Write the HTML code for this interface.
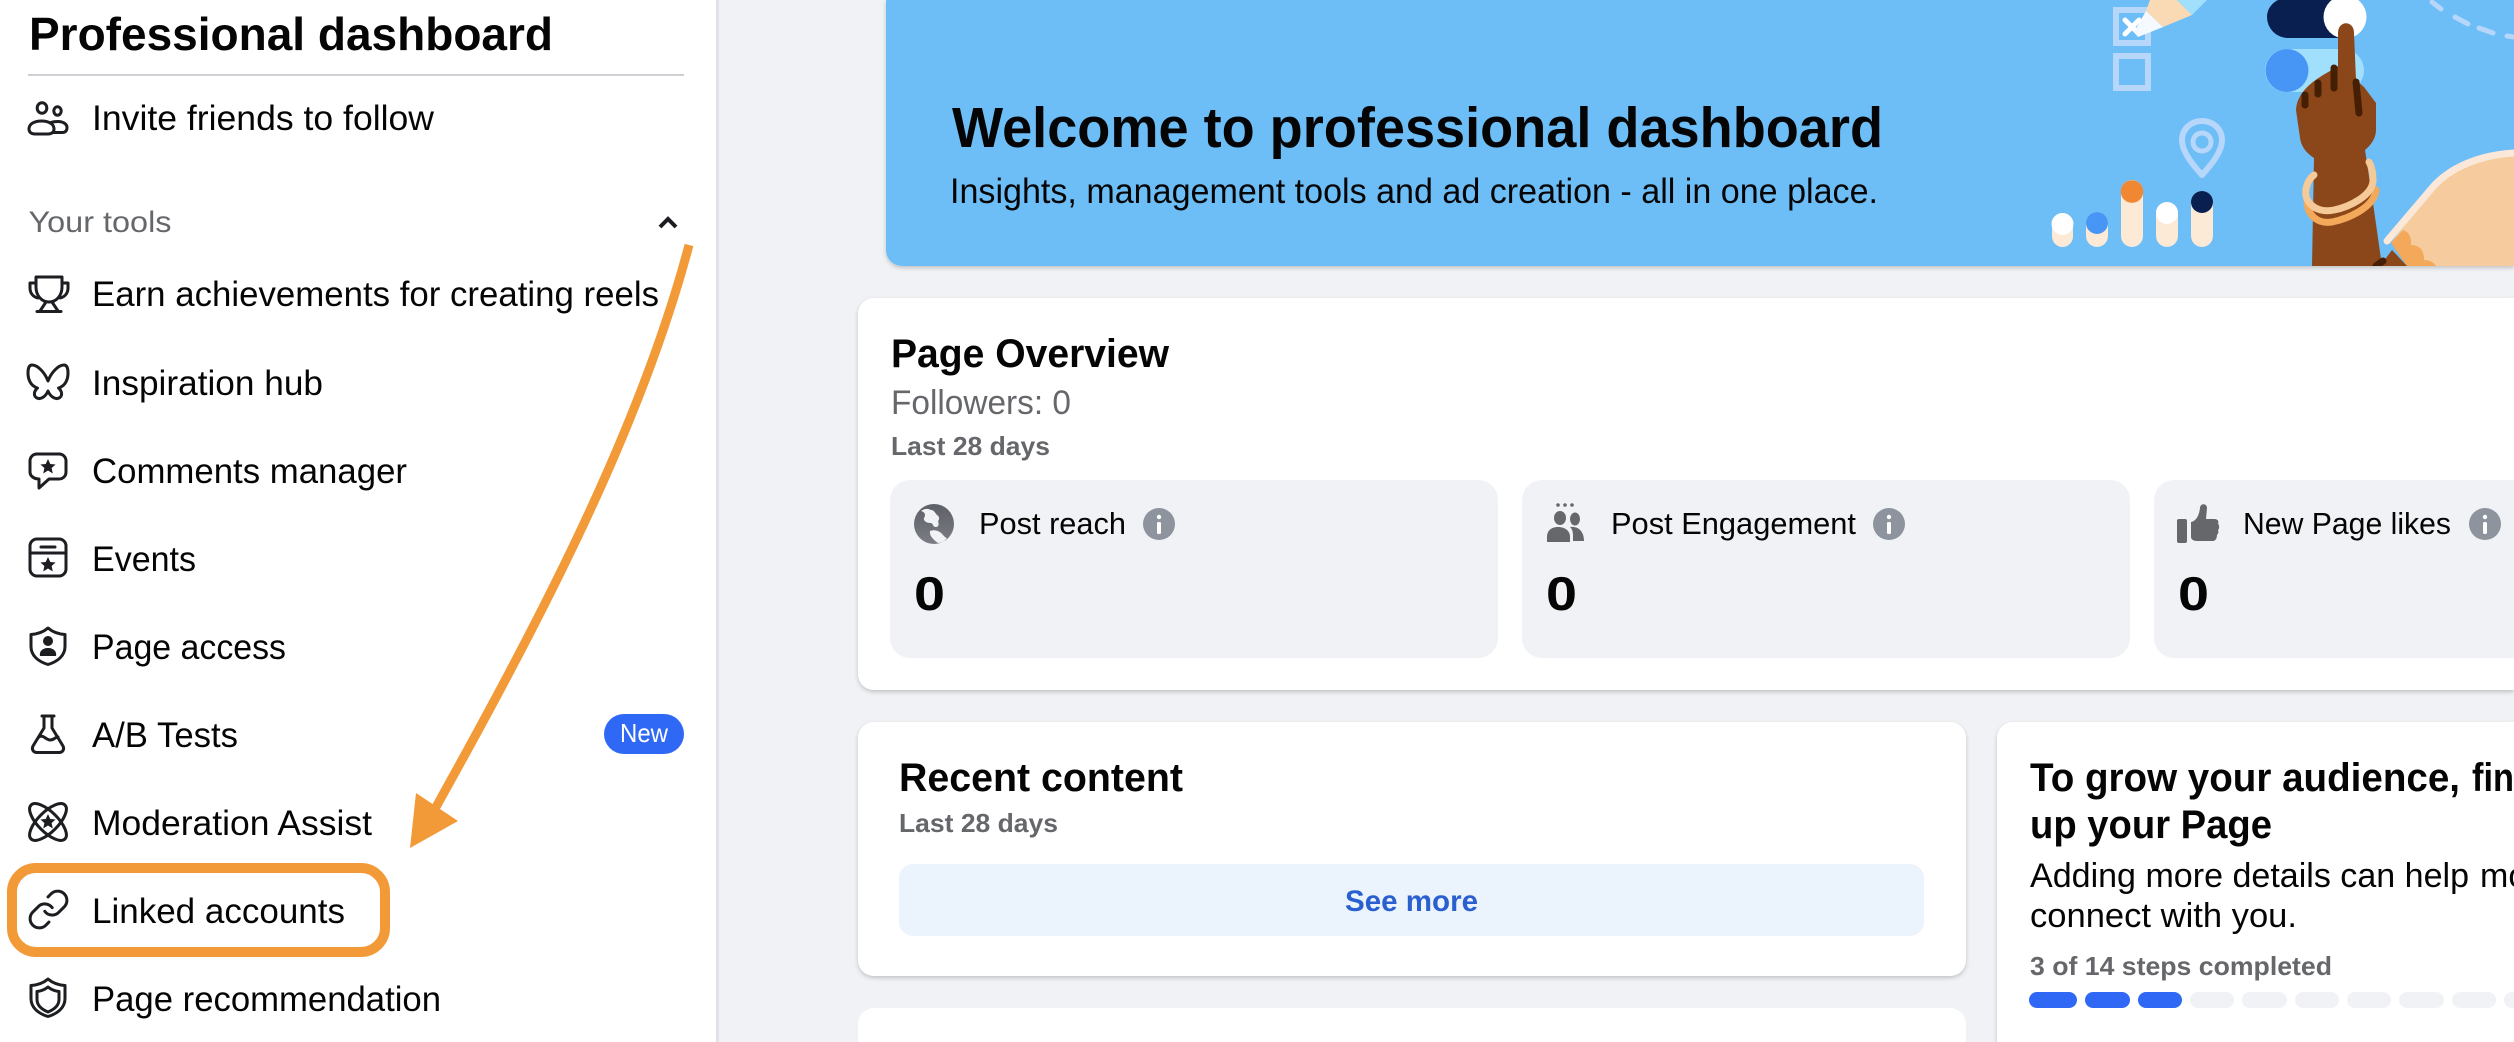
<!DOCTYPE html>
<html lang="en"><head><meta charset="utf-8"><title>Professional dashboard</title>
<style>
html,body{margin:0;padding:0;width:2514px;height:1042px;overflow:hidden;background:#f0f2f5}
svg{display:block}
text{font-family:"Liberation Sans",Arial,sans-serif;fill:#050505}
.r{font-size:35px}
.g{font-size:26px;font-weight:700;fill:#65676b}
.h{font-size:40px;font-weight:700}
.t{font-size:31px}
.n{font-size:47px;font-weight:700}
.ic{fill:none;stroke:#1c1e21;stroke-width:3;stroke-linejoin:round;stroke-linecap:round}
.f{fill:#1c1e21;stroke:none}
</style></head><body>
<svg width="2514" height="1042" viewBox="0 0 2514 1042" xmlns="http://www.w3.org/2000/svg">
<defs>
<filter id="s" x="-5%" y="-5%" width="110%" height="110%"><feDropShadow dx="0" dy="2" stdDeviation="2" flood-color="#000" flood-opacity=".2"/></filter>
<linearGradient id="gr" x1="0" y1="0" x2="0" y2="1"><stop offset="0" stop-color="#5d6066"/><stop offset="1" stop-color="#7a7d83"/></linearGradient>
<clipPath id="bc"><path d="M886 0H2514V266H902a16 16 0 0 1-16-16z"/></clipPath>
</defs>
<rect width="2514" height="1042" fill="#f0f2f5"/>
<!-- Sidebar -->
<rect x="716" width="3" height="1042" fill="#e0e2e7"/>
<rect width="716" height="1042" fill="#fff"/>
<text x="29" y="50" font-size="46" font-weight="700" textLength="524" lengthAdjust="spacingAndGlyphs">Professional dashboard</text>
<rect x="28" y="74" width="656" height="2" fill="#ced0d4"/>
<text class="r" x="92" y="130" textLength="342" lengthAdjust="spacingAndGlyphs">Invite friends to follow</text>
<text x="28.500" y="232" font-size="30" style="fill:#65676b" textLength="143" lengthAdjust="spacingAndGlyphs">Your tools</text>
<polyline points="660,227 668,219 676,227" fill="none" stroke="#1c1e21" stroke-width="4"/>
<text class="r" x="92" y="306" textLength="567" lengthAdjust="spacingAndGlyphs">Earn achievements for creating reels</text>
<text class="r" x="92" y="395" textLength="231" lengthAdjust="spacingAndGlyphs">Inspiration hub</text>
<text class="r" x="92" y="483" textLength="315" lengthAdjust="spacingAndGlyphs">Comments manager</text>
<text class="r" x="92" y="571" textLength="104" lengthAdjust="spacingAndGlyphs">Events</text>
<text class="r" x="92" y="659" textLength="194" lengthAdjust="spacingAndGlyphs">Page access</text>
<text class="r" x="92" y="747" textLength="146" lengthAdjust="spacingAndGlyphs">A/B Tests</text>
<text class="r" x="92" y="835" textLength="280" lengthAdjust="spacingAndGlyphs">Moderation Assist</text>
<text class="r" x="92" y="923" textLength="253" lengthAdjust="spacingAndGlyphs">Linked accounts</text>
<text class="r" x="92" y="1011" textLength="349" lengthAdjust="spacingAndGlyphs">Page recommendation</text>
<rect x="604" y="714" width="80" height="40" rx="20" fill="#2e68f5"/>
<text x="620" y="742" font-size="26" style="fill:#fff" textLength="48" lengthAdjust="spacingAndGlyphs">New</text>
<!-- sidebar icons -->
<g class="ic">
<ellipse cx="42" cy="108" rx="4.800" ry="5.300"/><ellipse cx="57.500" cy="111" rx="3.700" ry="4.300"/>
<path d="M35 134h13c4 0 6-2 6-5 0-5-5-8-12.500-8S29 124 29 129c0 3 2 5 6 5z"/>
<path d="M50 123c2-1 5-1.500 8-1.500 5 0 9 2.500 9 6 0 3-1.500 5-4.500 5H54"/>
<path d="M36 277h26v10c0 9-6 15-13 15s-13-6-13-15z"/>
<path d="M36 283h-6v5c0 5 3 9 8 10M62 283h6v5c0 5-3 9-8 10"/>
<path d="M46 302l-6 9M52 302l6 9M37 311.500h24"/>
<path d="M48 381C45 373 38 365 32 365C29 365 28 368 28 373C28 380 31 386 37.500 388C34 391 33 396 37 398C41 400 46 396 48 391C50 396 55 400 59 398C63 396 62 391 58.500 388C65 386 68 380 68 373C68 368 67 365 64 365C58 365 51 373 48 381Z"/>
<path d="M37 454h22c4 0 7 3 7 7v11c0 4-3 7-7 7H49l-10 9v-9c-5 0-9-3-9-7v-11c0-4 3-7 7-7z"/>
<rect x="30" y="539" width="36" height="37" rx="7"/><path d="M30 553h36M41 547h14"/>
<path d="M48 628c4 3.500 10 6 17 6.500v12c0 9-7 15-17 18-10-3-17-9-17-18v-12c7-.5 13-3 17-6.500z"/>
<path d="M42 716h12M44 716v12M52 716v12L63 746c1.500 3 0 6.500-4 6.500H37c-4 0-5.500-3.500-4-6.500l11-18"/>
<path d="M39 737c4-3 7 3 11 3 4 0 5-3 8-3"/>
<ellipse cx="48" cy="822" rx="24" ry="10" transform="rotate(45 48 822)"/>
<ellipse cx="48" cy="822" rx="24" ry="10" transform="rotate(-45 48 822)"/>
<g transform="translate(26.300 887.300) scale(1.850)" stroke-width="1.620"><path d="M10 13a5 5 0 0 0 7.540.54l3-3a5 5 0 0 0-7.070-7.070l-1.720 1.710"/><path d="M14 11a5 5 0 0 0-7.540-.54l-3 3a5 5 0 0 0 7.070 7.070l1.710-1.710"/></g>
<path d="M48 979c4 3.500 10 6 17 6.500v13c0 9-7 15-17 18-10-3-17-9-17-18v-13c7-.5 13-3 17-6.500z"/>
<path d="M48 987c3 2.500 7 4 11 4.500v8c0 6-5 10-11 12.500-6-2.500-11-6.500-11-12.500v-8c4-.5 8-2 11-4.500z"/>
</g>
<g class="f">
<path d="M48 459l2.300 5 5.300.5-4 3.500 1.200 5.500-4.800-3-4.800 3 1.200-5.500-4-3.500 5.300-.5z"/>
<path d="M48 557l2.300 5 5.300.5-4 3.500 1.200 5.500-4.800-3-4.800 3 1.200-5.500-4-3.500 5.300-.5z"/>
<circle cx="48" cy="641" r="5"/><path d="M40 656c-1-5 3-8 8-8s9 3 8 8z"/>
<path d="M48 814l2.300 5 5.300.5-4 3.500 1.200 5.500-4.800-3-4.800 3 1.200-5.500-4-3.500 5.300-.5z"/>
</g>
<!-- Annotation -->
<path d="M689 245C640 430 540 620 436 807" fill="none" stroke="#f39a38" stroke-width="9"/>
<polygon points="410,848 416,793 458,821" fill="#f39a38"/>
<rect x="12" y="868" width="373" height="84" rx="24" fill="none" stroke="#f39a38" stroke-width="10"/>
<!-- Banner -->
<path d="M886 0H2514V266H902a16 16 0 0 1-16-16z" fill="#6dbdf7" filter="url(#s)"/>
<text x="952" y="147" font-size="57" font-weight="700" textLength="931" lengthAdjust="spacingAndGlyphs">Welcome to professional dashboard</text>
<text x="950" y="203" font-size="35" textLength="928" lengthAdjust="spacingAndGlyphs">Insights, management tools and ad creation - all in one place.</text>
<g clip-path="url(#bc)">
<g fill="none" stroke="#b6d6fa" stroke-width="6"><rect x="2116" y="10" width="32" height="33"/><rect x="2116" y="56" width="32" height="32"/></g>
<path d="M2125 20l14 14M2139 20l-14 14" stroke="#fff" stroke-width="5" stroke-linecap="round"/>
<polygon points="2146,11 2163,27 2138,37 2134,32" fill="#f4faff"/>
<polygon points="2146,11 2150,0 2177,0 2192,15 2163,27" fill="#fadab4"/>
<polygon points="2177,0 2207,0 2192,15" fill="#a0e0fd"/>
<path d="M2432 2l9 7M2455 17l13 7M2479 28l14 5M2507 36l7 1" stroke="#b6d6fa" stroke-width="5" stroke-linecap="round"/>
<path d="M2288 0H2352c8 3 14 9 14 17s-9 21-21 21H2288a21 21 0 0 1-21-21c0-8 5-14 11-17z" fill="#081f4f"/><circle cx="2345" cy="17" r="21.500" fill="#fff"/>
<rect x="2265" y="49" width="99" height="43" rx="21.500" fill="#a0e0fd"/><circle cx="2287" cy="70.500" r="21.500" fill="#4796f6"/>
<path d="M2202 175c-7-8-20-22-20-35 0-11 9-19 20-19s20 8 20 19c0 13-13 27-20 35z" fill="none" stroke="#b6d6fa" stroke-width="6" stroke-linejoin="round"/>
<circle cx="2202" cy="142" r="9" fill="none" stroke="#b6d6fa" stroke-width="5"/>
<rect x="2052" y="213" width="21" height="34" rx="10.500" fill="#fce9d6"/><circle cx="2062.500" cy="224" r="11" fill="#fff"/>
<rect x="2086" y="212" width="22" height="35" rx="11" fill="#fce9d6"/><circle cx="2097" cy="223" r="11" fill="#4796f6"/>
<rect x="2121" y="180" width="22" height="67" rx="11" fill="#fce9d6"/><circle cx="2132" cy="191.500" r="11.300" fill="#f08733"/>
<rect x="2156" y="202" width="22" height="45" rx="11" fill="#fce9d6"/><circle cx="2167" cy="213" r="11" fill="#fff"/>
<rect x="2191" y="191" width="22" height="56" rx="11" fill="#fce9d6"/><circle cx="2202" cy="202" r="11" fill="#081f4f"/>
<!-- sleeve -->
<path d="M2391 243L2432 190C2450 168 2480 156 2514 155V266H2420z" fill="#f6cc9e"/>
<path d="M2387 241L2432 188C2450 167 2480 155 2514 153" fill="none" stroke="#fce8d8" stroke-width="7" stroke-linecap="round"/>
<path d="M2391 243L2403 230Q2412 233 2411 245Q2424 245 2424 260Q2432 260 2436 266H2407z" fill="#f4a95a"/>
<!-- hand -->
<path d="M2331 70L2338 66V33c0-13 16-13 16 0L2356 80l8 7 12 16v27c0 8-5 15-11 20l8 53 9 63h-70l2-108c-8-5-13-12-14-20l-4-28c1-18 17-30 36-40z" fill="#8b4719"/>
<path d="M2380 266l12-16 15 16z" fill="#8b4719"/>
<path d="M2376 266l7-5" stroke="#441f03" stroke-width="7" stroke-linecap="round"/>
<path d="M2305 95v10M2318 83v11M2334 68v20M2356 82l3 31" stroke="#441f03" stroke-width="7" stroke-linecap="round" fill="none"/>
<path d="M2307 202c1 15 12 22 25 20 15-3 42-14 44-32" fill="none" stroke="#f4a95a" stroke-width="7" stroke-linecap="round"/>
<path d="M2314 175c-9 7-10 20-6 26 6 9 16 11 26 9 15-3 38-14 39-29 0-7-1-14-4-19" fill="none" stroke="#f5c998" stroke-width="7" stroke-linecap="round"/>
</g>
<!-- Page overview -->
<path d="M874 298H2514V690H874a16 16 0 0 1-16-16V314a16 16 0 0 1 16-16z" fill="#fff" filter="url(#s)"/>
<text class="h" x="891" y="367" textLength="278" lengthAdjust="spacingAndGlyphs">Page Overview</text>
<text x="891" y="414" font-size="34" style="fill:#65676b" textLength="180" lengthAdjust="spacingAndGlyphs">Followers: 0</text>
<text class="g" x="891" y="455" textLength="159" lengthAdjust="spacingAndGlyphs">Last 28 days</text>
<rect x="890" y="480" width="608" height="178" rx="20" fill="#f0f2f5"/>
<rect x="1522" y="480" width="608" height="178" rx="20" fill="#f0f2f5"/>
<path d="M2174 480H2514V658H2174a20 20 0 0 1-20-20V500a20 20 0 0 1 20-20z" fill="#f0f2f5"/>
<circle cx="934" cy="524" r="20" fill="url(#gr)"/>
<path d="M921 511c4 1 5 4 3 7-1 3 3 5 6 5 4 0 2 4 6 4 3 0 3-3 2-6 2-2 1-5-1-6-2-2-3-5-6-5-4-2-7-1-10 1zM930 531c5-2 10 0 13 4 2 2 3 3 4 3-2 3-5 5-9 5-4-3-9-7-8-12z" fill="#f0f2f5"/>
<text class="t" x="979" y="534" textLength="147" lengthAdjust="spacingAndGlyphs">Post reach</text>
<circle cx="1159" cy="524" r="16" fill="#8d949e"/><circle cx="1159" cy="517" r="2.200" fill="#fff"/><rect x="1157" y="522" width="4" height="12" rx="1.500" fill="#fff"/>
<text class="n" x="914" y="610" textLength="31" lengthAdjust="spacingAndGlyphs">0</text>
<g fill="#65676b"><circle cx="1558" cy="505" r="1.800"/><circle cx="1565" cy="505" r="1.800"/><circle cx="1572" cy="505" r="1.800"/>
<ellipse cx="1560" cy="518" rx="6" ry="7"/><ellipse cx="1575" cy="519" rx="5" ry="6.500"/>
<path d="M1547 542v-5c0-7 5-10 11-10s12 3 12 10v5z"/><path d="M1573 541v-5c0-5-1-7-3-9 8-1 14 4 14 14z"/></g>
<text class="t" x="1611" y="534" textLength="245" lengthAdjust="spacingAndGlyphs">Post Engagement</text>
<circle cx="1889" cy="524" r="16" fill="#8d949e"/><circle cx="1889" cy="517" r="2.200" fill="#fff"/><rect x="1887" y="522" width="4" height="12" rx="1.500" fill="#fff"/>
<text class="n" x="1546" y="610" textLength="31" lengthAdjust="spacingAndGlyphs">0</text>
<g fill="#65676b"><rect x="2177" y="519" width="10" height="24" rx="2"/>
<path d="M2191 522c5-1 8-6 9-14 0-5 7-5 7 0l-1 11h8c4 0 5 2 4 5 1 0 2 4 0 6 1 2 0 4-1 5 0 4-2 6-4 6h-16c-4 0-6-2-6-4z"/></g>
<text class="t" x="2243" y="534" textLength="208" lengthAdjust="spacingAndGlyphs">New Page likes</text>
<circle cx="2485" cy="524" r="16" fill="#8d949e"/><circle cx="2485" cy="517" r="2.200" fill="#fff"/><rect x="2483" y="522" width="4" height="12" rx="1.500" fill="#fff"/>
<text class="n" x="2178" y="610" textLength="31" lengthAdjust="spacingAndGlyphs">0</text>
<!-- Recent content -->
<rect x="858" y="722" width="1108" height="254" rx="16" fill="#fff" filter="url(#s)"/>
<text class="h" x="899" y="791" textLength="284" lengthAdjust="spacingAndGlyphs">Recent content</text>
<text class="g" x="899" y="832" textLength="159" lengthAdjust="spacingAndGlyphs">Last 28 days</text>
<rect x="899" y="864" width="1025" height="72" rx="14" fill="#ebf3fd"/>
<text x="1345" y="911" font-size="30" font-weight="700" style="fill:#2a5fcf" textLength="133" lengthAdjust="spacingAndGlyphs">See more</text>
<path d="M874 1008H1950a16 16 0 0 1 16 16V1042H858V1024a16 16 0 0 1 16-16z" fill="#fff"/>
<!-- Right card -->
<path d="M2013 722H2514V1042H1997V738a16 16 0 0 1 16-16z" fill="#fff" filter="url(#s)"/>
<text class="h" x="2030" y="791" textLength="430" lengthAdjust="spacingAndGlyphs">To grow your audience,</text>
<text class="h" x="2472" y="791" textLength="42" lengthAdjust="spacingAndGlyphs">fin</text>
<text class="h" x="2030" y="838" textLength="242" lengthAdjust="spacingAndGlyphs">up your Page</text>
<text x="2030" y="887" font-size="34" textLength="439" lengthAdjust="spacingAndGlyphs">Adding more details can help</text>
<text x="2480" y="887" font-size="34">mo</text>
<text x="2030" y="927" font-size="34" textLength="267" lengthAdjust="spacingAndGlyphs">connect with you.</text>
<text class="g" x="2030" y="975" textLength="302" lengthAdjust="spacingAndGlyphs">3 of 14 steps completed</text>
<g fill="#2e68f5"><rect x="2029" y="992" width="48" height="16" rx="8"/><rect x="2085" y="992" width="45" height="16" rx="8"/><rect x="2138" y="992" width="44" height="16" rx="8"/></g>
<g fill="#f0f2f5"><rect x="2190" y="992" width="44" height="16" rx="8"/><rect x="2242" y="992" width="45" height="16" rx="8"/><rect x="2295" y="992" width="44" height="16" rx="8"/><rect x="2347" y="992" width="44" height="16" rx="8"/><rect x="2399" y="992" width="45" height="16" rx="8"/><rect x="2452" y="992" width="44" height="16" rx="8"/><path d="M2514 992H2512a8 8 0 0 0 0 16H2514z"/></g>
</svg>
</body></html>
